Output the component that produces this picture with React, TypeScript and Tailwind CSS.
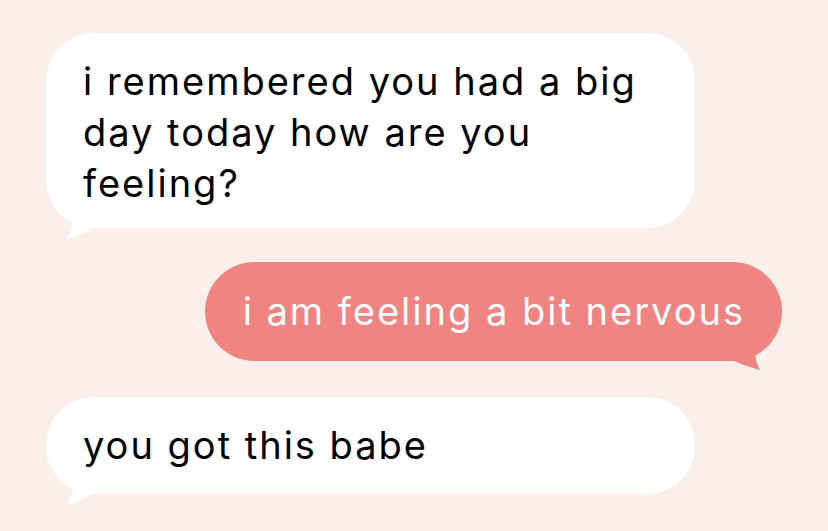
const WhiteTail = () => (
  <svg
    className="absolute left-[18px] bottom-[-14px]"
    width="40"
    height="30"
    viewBox="0 0 40 30"
  >
    <path d="M8 0 C10 8 8 18 3 27 C12 25 22 20 34 12 L34 0 Z" fill="#ffffff" />
  </svg>
);

const PinkTail = () => (
  <svg
    className="absolute right-[16px] bottom-[-12px]"
    width="40"
    height="30"
    viewBox="0 0 40 30"
  >
    <path d="M0 0 L0 14 C12 20 22 24 34 27 C30 20 28 12 30 0 Z" fill="#f08482" />
  </svg>
);

const Incoming = ({
  children,
  pad,
}: {
  children: React.ReactNode;
  pad: string;
}) => (
  <div
    className={`relative w-[649px] rounded-[48px] bg-white px-[37px] text-[38px] leading-[51px] tracking-[2px] text-black ${pad}`}
  >
    <p className="relative z-10">{children}</p>
    <WhiteTail />
  </div>
);

const App = () => {
  return (
    <div
      className="w-[828px] h-[531px] overflow-hidden bg-[#fbefeb] pt-[33px] pl-[46px] pr-[46px]"
      style={{ fontFamily: "Inter, 'Noto Sans', sans-serif" }}
    >
      <div className="flex flex-col">
        <Incoming pad="pt-[23px] pb-[19px]">
          i remembered you had a big day today how are you feeling?
        </Incoming>

        <div className="mt-[34px] flex justify-end">
          <div className="relative rounded-[50px] bg-[#f08482] pl-[38px] pr-[37px] py-[24px] text-[38px] leading-[51px] tracking-[2px] text-white">
            <p className="relative z-10">i am feeling a bit nervous</p>
            <PinkTail />
          </div>
        </div>

        <div className="mt-[36px]">
          <Incoming pad="py-[23px]">you got this babe</Incoming>
        </div>
      </div>
    </div>
  );
};

export default App;
